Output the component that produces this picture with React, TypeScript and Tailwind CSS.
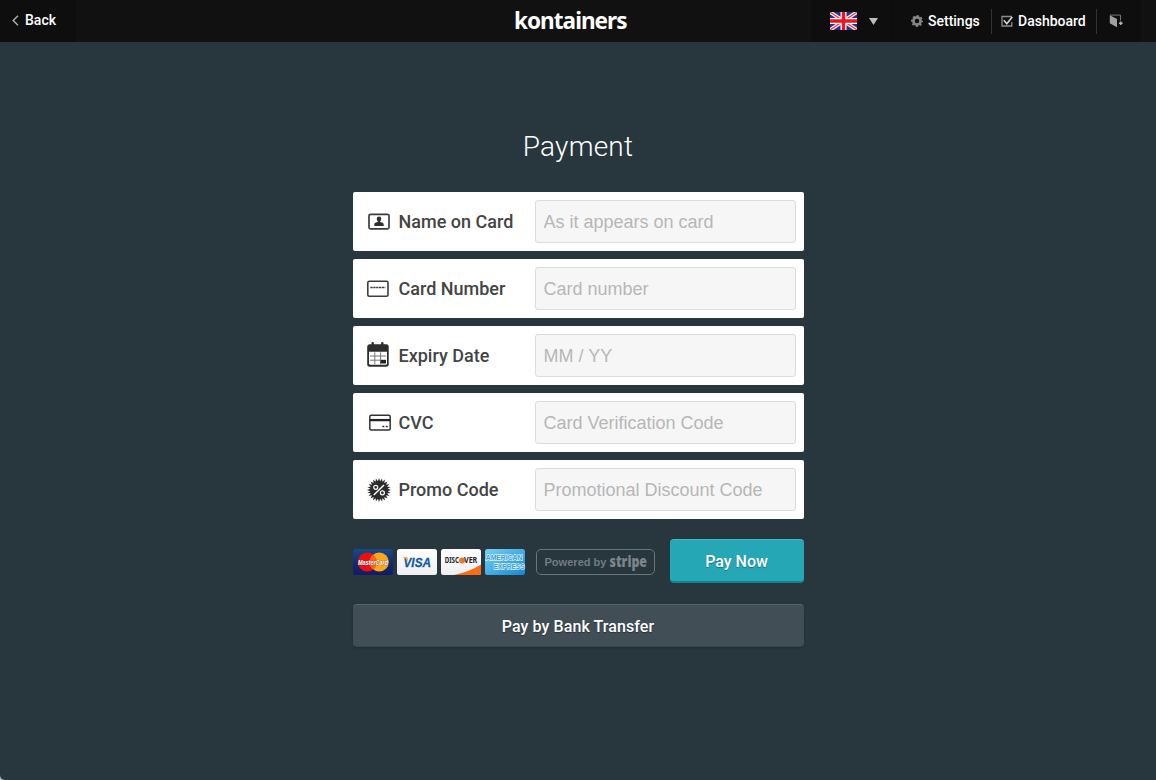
import React from "react";

const NameIcon = () => (
  <svg className="ml-[15px] h-[17px] w-[22px] shrink-0" viewBox="0 0 22 17" fill="none">
    <rect x="1" y="1.300" width="20" height="14.500" rx="1.500" stroke="#3c3c3c" strokeWidth="1.700" />
    <circle cx="11" cy="5.900" r="2.300" fill="#303030" />
    <path d="M6.300 12.900v-1.600c0-1.400 2-2 3.600-2.500V7h2.200v1.800c1.600.5 3.600 1.100 3.600 2.500v1.600z" fill="#303030" />
  </svg>
);

const NumberIcon = () => (
  <svg className="ml-3.5 mr-px h-[17px] w-[22px] shrink-0" viewBox="0 0 22 17" fill="none">
    <rect x=".8" y="1.200" width="20.200" height="15" rx="1.500" stroke="#3c3c3c" strokeWidth="1.600" />
    <path d="M3.300 7.500h15" stroke="#444" strokeWidth="1.300" strokeDasharray="2.400 .5" />
  </svg>
);

const CalendarIcon = () => (
  <svg className="ml-3.5 mr-px mb-0.5 h-[25px] w-[22px] shrink-0" viewBox="0 0 22 25">
    <path
      d="M2.500 2.300h2V1q0-1 1.200-1t1.200 1v1.300h7.200V1q0-1 1.200-1t1.200 1v1.300h2.700q2.500 0 2.500 2.500v17.400q0 2.500-2.500 2.500h-16.500Q.2 24.700.2 22.200V4.800q0-2.500 2.300-2.500z"
      fill="#2d2d2d"
    />
    <path d="M2 9.800h18v11.400q0 1.500-1.500 1.500h-15q-1.500 0-1.500-1.500z" fill="#fff" />
    <path d="M3 14h16M3 18.200h16M7.800 10.300v12M13.600 10.300v12" stroke="#777" strokeWidth="1" />
    <path d="M13.600 18h5.400v3.500h-5.400z" fill="#222" />
  </svg>
);

const CvcIcon = () => (
  <svg className="ml-4 -mr-px h-[17px] w-[22px] shrink-0" viewBox="0 0 22 17" fill="none">
    <rect x=".8" y="1.300" width="20.400" height="14.700" rx="1.500" stroke="#333" strokeWidth="1.500" />
    <path d="M1 6.100h20" stroke="#222" strokeWidth="2.300" />
    <path d="M13.300 12.500h2M16.700 12.500h2" stroke="#333" strokeWidth="1.500" />
  </svg>
);

const burst = Array.from({ length: 48 }, (_, i) => {
  const r = i % 2 === 0 ? 12 : 8.8;
  const a = (i * Math.PI) / 24;
  return `${12 + r * Math.sin(a)},${12 - r * Math.cos(a)}`;
}).join(" ");

const PromoIcon = () => (
  <svg className="ml-3.5 -mr-px h-6 w-6 shrink-0" viewBox="0 0 24 24" fill="none">
    <polygon points={burst} fill="#2c2c2c" />
    <path d="M6.800 17L17 7" stroke="#fff" strokeWidth="1.500" />
    <circle cx="8.700" cy="9.300" r="2" stroke="#fff" strokeWidth="1.200" />
    <circle cx="15.400" cy="14.800" r="2" stroke="#fff" strokeWidth="1.200" />
  </svg>
);

const Flag = () => (
  <svg className="h-[18px] w-[27px]" viewBox="0 0 27 18">
    <path d="M0 0h27v18H0z" fill="#29318c" />
    <path d="M0 0l27 18M27 0L0 18" stroke="#f4eef5" strokeWidth="3.600" />
    <path d="M0 0l27 18M27 0L0 18" stroke="#e63848" strokeWidth="1.200" />
    <path d="M13.500 0v18M0 9h27" stroke="#fff" strokeWidth="6" />
    <path d="M13.500 0v18M0 9h27" stroke="#f5101c" strokeWidth="3.400" />
  </svg>
);

const Gear = () => (
  <svg className="h-3 w-3" viewBox="0 0 12 12" fill="none">
    <circle cx="6" cy="6" r="5.200" stroke="#858585" strokeWidth="1.600" strokeDasharray="2.042 2.042" strokeDashoffset="1" />
    <circle cx="6" cy="6" r="3.600" stroke="#858585" strokeWidth="2.700" />
  </svg>
);

const CheckBox = () => (
  <svg className="h-[13px] w-[13px]" viewBox="0 0 13 13" fill="none">
    <path d="M10.800 7v4h-9.800v-9.500h10" stroke="#8c8c8c" strokeWidth="1.300" />
    <path d="M2.800 5.300l3 3.400L11.300 2" stroke="#d5d5d5" strokeWidth="1.700" />
  </svg>
);

const Door = () => (
  <svg className="h-[14px] w-[14px]" viewBox="0 0 14 14" fill="none">
    <path d="M.8 1.200L8 5v8.300L.8 9.200z" fill="#a0a0a0" />
    <path d="M1 1.100h10.500v5.400" stroke="#777" strokeWidth="1" />
    <path d="M10 9.200h3.600M11.800 7.400v3.600" stroke="#b5b5b5" strokeWidth="1.500" />
  </svg>
);

const cardBase = "h-[26px] w-10 overflow-visible";

const Cards = () => (
  <div className="mt-px flex gap-1">
    <svg className={cardBase} viewBox="0 0 40 26" fontFamily="Liberation Sans, sans-serif">
      <defs>
        <linearGradient id="mc" x2="0" y2="1">
          <stop stopColor="#174a87" />
          <stop offset=".6" stopColor="#14286c" />
          <stop offset="1" stopColor="#101b68" />
        </linearGradient>
      </defs>
      <rect width="40" height="26" rx="2.500" fill="url(#mc)" />
      <circle cx="14.300" cy="13" r="9.500" fill="#f00d12" />
      <circle cx="26.300" cy="13" r="9.500" fill="#fda619" />
      <path d="M20.300 5.500a9.500 9.500 0 0 1 0 15 9.500 9.500 0 0 1 0-15" fill="#f4661a" />
      <text x="5" y="15.600" fontSize="7.400" fontWeight="700" fontStyle="italic" fill="#fff" stroke="#7d3330" strokeWidth=".6" paintOrder="stroke" textLength="30" lengthAdjust="spacingAndGlyphs">MasterCard</text>
    </svg>
    <svg className={cardBase} viewBox="0 0 40 26" fontFamily="Liberation Sans, sans-serif">
      <defs>
        <linearGradient id="wh" x2="0" y2="1">
          <stop stopColor="#fff" />
          <stop offset="1" stopColor="#efeff2" />
        </linearGradient>
      </defs>
      <rect width="40" height="26" rx="2.500" fill="url(#wh)" />
      <text x="6.500" y="17.700" fontSize="13.500" fontWeight="700" fontStyle="italic" fill="#165aa2" stroke="#165aa2" strokeWidth=".3" textLength="27.500" lengthAdjust="spacingAndGlyphs">VISA</text>
      <path d="M5.600 8.100h3.800q1 0 1.200 1l.6 3.400Q9 9.300 5.600 8.100z" fill="#f7a823" />
    </svg>
    <svg className={cardBase} viewBox="0 0 40 26" fontFamily="Noto Sans, sans-serif">
      <rect width="40" height="26" rx="2.500" fill="url(#wh)" />
      <path d="M13 26Q29 22.500 40 15.500v8q0 2.500-2.500 2.500z" fill="#fb6d14" />
      <circle cx="21" cy="11.500" r="3" fill="#f47624" />
      <text x="3.700" y="14.400" fontSize="8" fontWeight="700" fill="#262626" textLength="14.200" lengthAdjust="spacingAndGlyphs">DISC</text>
      <text x="23" y="14.400" fontSize="8" fontWeight="700" fill="#262626" textLength="13.300" lengthAdjust="spacingAndGlyphs">VER</text>
    </svg>
    <svg className={cardBase} viewBox="0 0 40 26" fontFamily="Liberation Sans, sans-serif" fontWeight="700" fontSize="8">
      <defs>
        <linearGradient id="ax" y2="1">
          <stop stopColor="#79cdf4" />
          <stop offset=".5" stopColor="#46aee4" />
          <stop offset="1" stopColor="#1686ce" />
        </linearGradient>
      </defs>
      <rect width="40" height="26" rx="2.500" fill="url(#ax)" />
      <g fill="#3b9dd5" stroke="#dff4fd" strokeWidth="1.300" paintOrder="stroke">
        <text x=".8" y="11.300" textLength="36.500" lengthAdjust="spacingAndGlyphs">AMERICAN</text>
        <text x="8.700" y="19.600" textLength="30.800" lengthAdjust="spacingAndGlyphs">EXPRESS</text>
      </g>
    </svg>
  </div>
);

const fields = [
  { label: "Name on Card", hint: "As it appears on card", Icon: NameIcon },
  { label: "Card Number", hint: "Card number", Icon: NumberIcon },
  { label: "Expiry Date", hint: "MM / YY", Icon: CalendarIcon },
  { label: "CVC", hint: "Card Verification Code", Icon: CvcIcon },
  { label: "Promo Code", hint: "Promotional Discount Code", Icon: PromoIcon },
];

export default function App() {
  return (
    <div className="h-[780px] w-full overflow-hidden bg-[#aeb4b7] font-['Roboto',sans-serif]">
      <div className="flex h-full flex-col rounded-bl-[5px] bg-[#28363e]">
        <header className="grid h-[42px] shrink-0 grid-cols-[512px_118px_1fr] bg-[#111] text-sm font-medium text-white">
          <div className="flex">
            <button className="flex h-full w-[76px] items-center bg-[#0e0e0e] pb-0.5 pl-3">
              <svg className="mr-[6px] h-[11px] w-[7px]" viewBox="0 0 7 11" fill="none">
                <path d="M6 .8L1.200 5.500 6 10.200" stroke="#aaa" strokeWidth="1.500" />
              </svg>
              Back
            </button>
          </div>
          <svg className="h-[42px] w-[118px]" viewBox="0 0 118 42">
            <text x="2" y="29" fill="#fff" fontFamily="Noto Sans, sans-serif" fontSize="23" fontWeight="700" textLength="112.500" lengthAdjust="spacingAndGlyphs" letterSpacing="-1">kontainers</text>
          </svg>
          <nav className="flex justify-end pr-[15px]">
            <div className="flex w-[83px] items-center border-r border-[#0c0c0c] bg-[#0e0e0e] pl-5">
              <Flag />
              <svg className="ml-3 h-[7px] w-[9px]" viewBox="0 0 9 7">
                <path d="M0 0h9L4.500 7z" fill="#bdbdbd" />
              </svg>
            </div>
            <div className="flex w-[248px] items-center bg-[#0e0e0e]">
              <div className="flex w-[98px] items-center gap-[5px] pl-[18px]">
                <Gear />
                <span>Settings</span>
              </div>
              <div className="flex h-[25px] w-[105px] items-center gap-1 border-l border-[#333] pl-[9px]">
                <CheckBox />
                <span>Dashboard</span>
              </div>
              <div className="flex h-[25px] items-center border-l border-[#333] pl-3">
                <Door />
              </div>
            </div>
          </nav>
        </header>

        <main className="mx-auto w-[451px] pt-[85px]">
          <h1 className="mb-[25px] text-center text-[28px] leading-10 font-light tracking-[0.200px] text-white">Payment</h1>
          <form className="flex flex-col gap-2">
            {fields.map(({ label, hint, Icon }) => (
              <label key={label} className="flex h-[59px] items-center rounded-[2px] bg-white pr-2">
                <Icon />
                <span className="ml-[9px] flex-1 text-[18px] font-medium text-[#444]">{label}</span>
                <input
                  placeholder={hint}
                  className="h-[43px] w-[261px] rounded-[3px] border border-[#dcdcdc] bg-[#f6f6f6] px-2 pt-0.5 font-['Liberation_Sans',sans-serif] text-[18px] placeholder:text-[#b7b7b7]"
                />
              </label>
            ))}
          </form>

          <div className="mt-5 flex h-11 items-center">
            <Cards />
            <div className="mt-px ml-[11px] flex h-[26px] w-[119px] items-center justify-center rounded-[5px] border border-[#69757c]">
              <svg className="h-6 w-[108px] overflow-visible" viewBox="0 0 108 24" fill="#7c858b">
                <text x="3.500" y="16" fontFamily="Liberation Sans, sans-serif" fontSize="11" fontWeight="700" textLength="62" lengthAdjust="spacingAndGlyphs" fill="#717c83">Powered by</text>
                <text x="68.500" y="17.300" fontFamily="Noto Sans, sans-serif" fontSize="15.500" fontWeight="900" textLength="37.500" lengthAdjust="spacingAndGlyphs">stripe</text>
              </svg>
            </div>
            <button className="ml-auto h-11 w-[134px] rounded-[4px] border-t border-b-2 border-t-[#45b8c3] border-b-[#168391] bg-[#25a7b5] pt-0.5 text-base font-medium text-white [text-shadow:0_1px_1px_#17747e]">
              Pay Now
            </button>
          </div>
          <button className="mt-[21px] h-[43px] w-full rounded-[4px] border-t border-b border-t-[#56646c] border-b-[#39464e] bg-[#414e56] pt-0.5 text-base font-medium tracking-[0.080px] text-white shadow-[0_1px_2px_#202c33] [text-shadow:0_1px_1px_#263138]">
            Pay by Bank Transfer
          </button>
        </main>
      </div>
    </div>
  );
}
